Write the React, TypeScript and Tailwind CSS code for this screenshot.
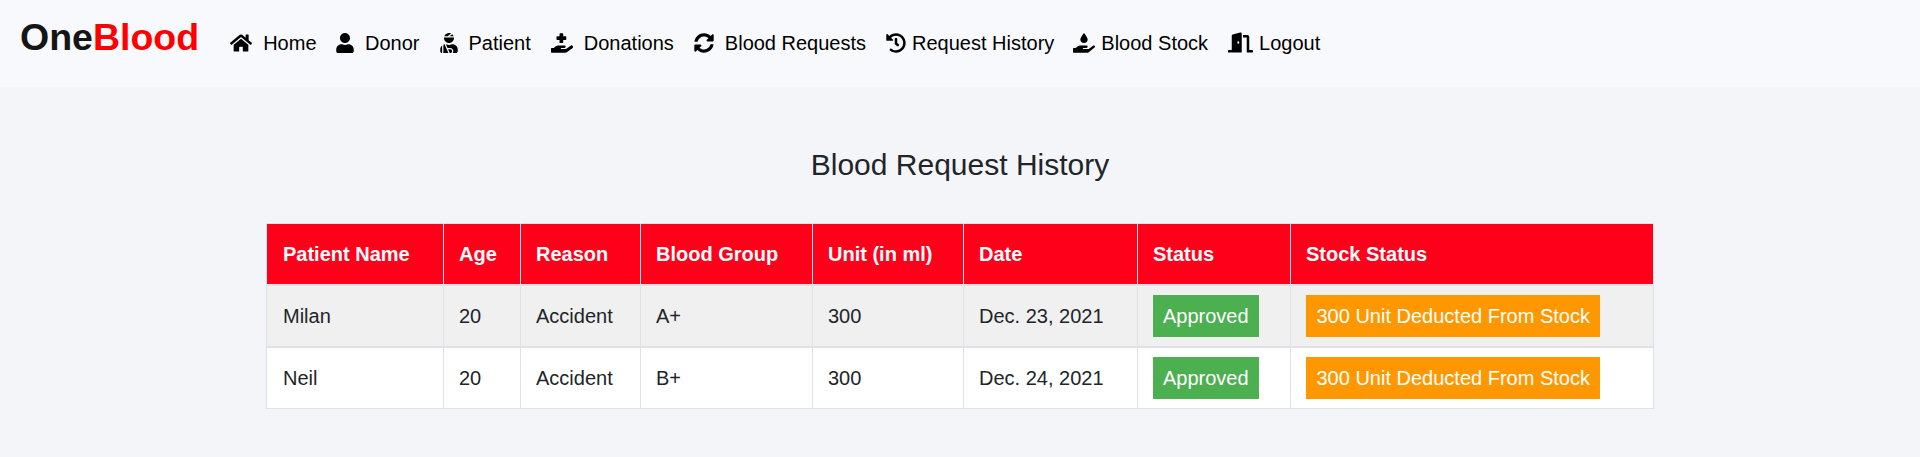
import { FaHome, FaUser, FaHandHoldingMedical, FaSyncAlt, FaHistory, FaHandHoldingWater, FaDoorOpen, FaUserInjured } from 'react-icons/fa'

const navItems = [
  { label: 'Home', icon: FaHome, size: 'text-[22px]', gap: 'gap-[11px]', ml: 'ml-[31px]' },
  { label: 'Donor', icon: FaUser, size: 'text-[20px]', gap: 'gap-[10px]', ml: 'ml-[18.5px]' },
  { label: 'Patient', icon: FaUserInjured, size: 'text-[20px]', gap: 'gap-[10px]', ml: 'ml-[19px]' },
  { label: 'Donations', icon: FaHandHoldingMedical, size: 'text-[22px]', gap: 'gap-[11px]', ml: 'ml-[20px]' },
  { label: 'Blood Requests', icon: FaSyncAlt, size: 'text-[20px]', gap: 'gap-[11px]', ml: 'ml-[20px]' },
  { label: 'Request History', icon: FaHistory, size: 'text-[20px]', gap: 'gap-[6px]', ml: 'ml-[20px]' },
  { label: 'Blood Stock', icon: FaHandHoldingWater, size: 'text-[22px]', gap: 'gap-[6px]', ml: 'ml-[19px]' },
  { label: 'Logout', icon: FaDoorOpen, size: 'text-[25px]', gap: 'gap-[6px]', ml: 'ml-[20px]' },
]

const columns = [
  { label: 'Patient Name', width: 'w-[177px]' },
  { label: 'Age', width: 'w-[77px]' },
  { label: 'Reason', width: 'w-[120px]' },
  { label: 'Blood Group', width: 'w-[172px]' },
  { label: 'Unit (in ml)', width: 'w-[151px]' },
  { label: 'Date', width: 'w-[174px]' },
  { label: 'Status', width: 'w-[153px]' },
  { label: 'Stock Status', width: 'w-[363px]' },
]

const rows = [
  { name: 'Milan', age: 20, reason: 'Accident', group: 'A+', unit: 300, date: 'Dec. 23, 2021', bg: 'bg-[#f0f0f0]', line: 'border-b-2' },
  { name: 'Neil', age: 20, reason: 'Accident', group: 'B+', unit: 300, date: 'Dec. 24, 2021', bg: 'bg-white', line: '' },
]

export default function App() {
  return (
    <div className="min-h-[457px] bg-[#f4f5f9] font-['Liberation_Sans',Arial,sans-serif] text-[#212529]">
      {/* Top nav */}
      <nav className="flex h-[87px] items-start bg-[#f8f9fc] pl-5">
        <a className="mt-[14px] text-[37.5px] font-bold leading-[47px] text-[#151515]">
          One<span className="text-[#ff0000]">Blood</span>
        </a>
        <ul className="mt-[30px] flex items-center text-[20px] leading-[24px] text-black">
          {navItems.map((item) => (
            <li key={item.label} className={`flex items-center ${item.gap} ${item.ml}`}>
              <item.icon className={item.size} />
              <span>{item.label}</span>
            </li>
          ))}
        </ul>
      </nav>

      <h2 className="mt-[60px] text-center text-[30px] font-normal leading-[36px]">Blood Request History</h2>

      {/* History table */}
      <div className="mt-[40px] flex justify-center">
        <table className="w-[1387px] table-fixed border-collapse border border-[#dee2e6] text-[20px]">
          <thead>
            <tr className="bg-[#ff001b] text-white">
              {columns.map((col) => (
                <th key={col.label} className={`${col.width} h-[61px] border-x border-x-[#e9ecef] border-b-2 border-b-[#dee2e6] px-[15px] text-left font-bold first:pl-[16px]`}>
                  {col.label}
                </th>
              ))}
            </tr>
          </thead>
          <tbody>
            {rows.map((row) => (
              <tr key={row.name} className={row.bg}>
                <td className={`h-[62px] border border-[#dee2e6] pl-[16px] pr-[15px] ${row.line}`}>{row.name}</td>
                <td className={`border border-[#dee2e6] px-[15px] ${row.line}`}>{row.age}</td>
                <td className={`border border-[#dee2e6] px-[15px] ${row.line}`}>{row.reason}</td>
                <td className={`border border-[#dee2e6] px-[15px] ${row.line}`}>{row.group}</td>
                <td className={`border border-[#dee2e6] px-[15px] ${row.line}`}>{row.unit}</td>
                <td className={`border border-[#dee2e6] px-[15px] ${row.line}`}>{row.date}</td>
                <td className={`border border-[#dee2e6] px-[15px] ${row.line}`}>
                  <span className="block h-[42px] w-fit bg-[#4caf50] px-[10px] leading-[42px] text-white">Approved</span>
                </td>
                <td className={`border border-[#dee2e6] px-[15px] ${row.line}`}>
                  <span className="block h-[42px] w-fit bg-[#ff9800] px-[10.5px] leading-[42px] text-white">300 Unit Deducted From Stock</span>
                </td>
              </tr>
            ))}
          </tbody>
        </table>
      </div>
    </div>
  )
}
